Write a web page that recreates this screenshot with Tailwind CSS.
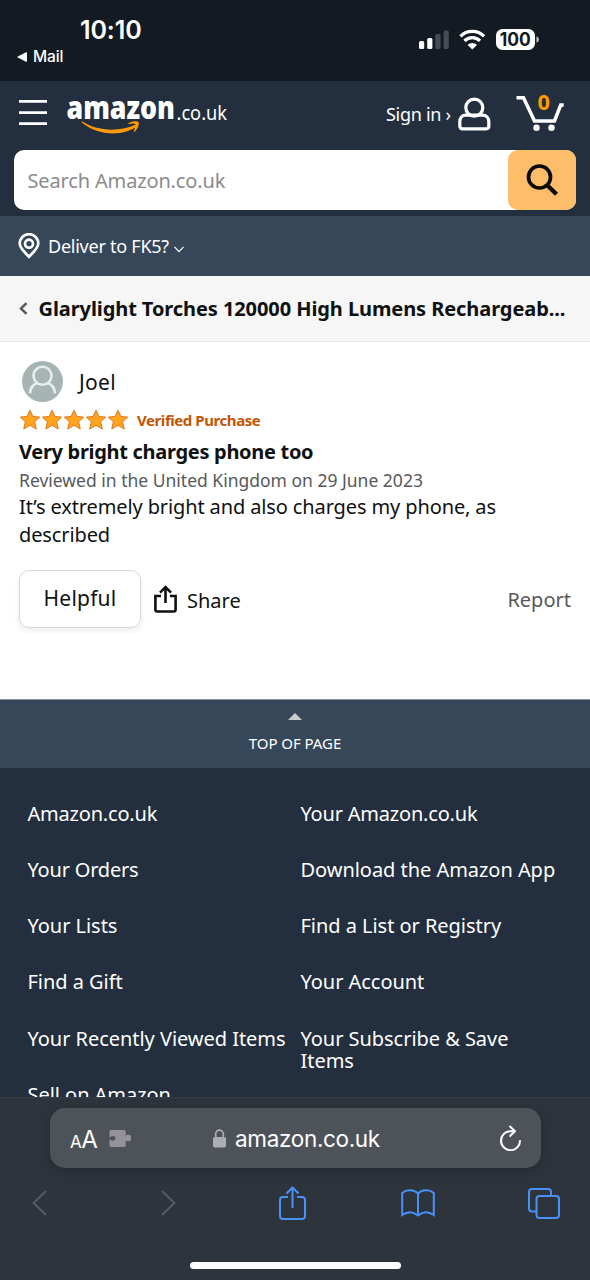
<!DOCTYPE html>
<html lang="en-GB">
<head>
<meta charset="utf-8">
<title>Amazon.co.uk</title>
<script src="https://cdn.jsdelivr.net/npm/@tailwindcss/browser@4"></script>
</head>
<body class="w-[590px] h-[1280px] overflow-hidden bg-white font-['Noto_Sans',sans-serif] text-[#0f1111] flex flex-col whitespace-nowrap">

<!-- Status bar -->
<div class="h-[81px] shrink-0 bg-[#131a22] text-white font-['Inter',sans-serif] flex justify-between">
  <div class="pl-[17px] pt-[15px] flex flex-col">
    <div class="pl-[63px] h-[30px] leading-[30px] text-[25px] font-semibold tracking-[-0.1px]">10:10</div>
    <div class="h-[24px] flex items-center gap-[6px] text-[15.5px] font-medium">
      <svg width="10" height="10" viewBox="0 0 10 10" fill="white"><path d="M9 .3Q10 0 10 1V9Q10 10 9 9.7L.8 5.6Q-.2 5 .8 4.4Z"/></svg>
      <span class="tracking-[-0.1px]">Mail</span>
    </div>
  </div>
  <div class="pt-[28px] pr-[51px] flex items-start">
    <svg width="120" height="24" viewBox="0 0 120 24">
      <rect x="0" y="13" width="5.200" height="8" rx="1.500" fill="#fff"/>
      <rect x="8.200" y="10" width="5.200" height="11" rx="1.500" fill="#fff"/>
      <rect x="16.300" y="6" width="5.200" height="15" rx="1.500" fill="#464c53"/>
      <rect x="24.600" y="2.500" width="5.200" height="18.500" rx="1.500" fill="#464c53"/>
      <g fill="none" stroke="#fff" stroke-width="3.300"><path d="M41.500 8.300a16.500 16.500 0 0 1 23.500 0"/><path d="M45.500 12.800a11 11 0 0 1 15.500 0"/></g>
      <path d="M53.250 21.500l-4.700-4.600a6.800 6.800 0 0 1 9.400 0z" fill="#fff"/>
      <rect x="77" y="1" width="39" height="21" rx="6.500" fill="#fff"/>
      <path d="M117.500 8.200q2.400 1 2.400 3.300t-2.400 3.300z" fill="#c9cbcd"/>
      <text x="96.200" y="18" text-anchor="middle" textLength="31" lengthAdjust="spacingAndGlyphs" font-family="Inter" font-weight="700" font-size="18.500" fill="#131a22">100</text>
    </svg>
  </div>
</div>

<!-- Site header -->
<header class="h-[135px] shrink-0 bg-[#232f3e] text-white">
  <div class="h-[69px] pl-[19px] flex">
    <svg class="mt-[18px]" width="28" height="28" viewBox="0 0 28 28"><path d="M0 2.400h28M0 13.700h28M0 24.600h28" stroke="#fff" stroke-width="2.700"/></svg>
    <svg class="ml-[19px] mt-[11px] overflow-visible shrink-0" width="164" height="46" viewBox="0 0 164 46">
      <text x="0.500" y="26.500" textLength="108.500" lengthAdjust="spacingAndGlyphs" font-family="Open Sans" font-weight="800" font-size="32.500" fill="#fff">amazon</text>
      <text x="110.500" y="28" textLength="50.500" lengthAdjust="spacingAndGlyphs" font-family="Noto Sans" font-size="19" fill="#fff">.co.uk</text>
      <path d="M16 29.200C29 37.500 49 41.500 69.500 32.800c1.500-.7 2.500.8 1.200 1.800C55 45.500 30 43 15.500 30.300z" fill="#f90"/>
      <path d="M62.500 31.200c4-2.500 8.500-2.400 10-1.200 1 1.800-.5 6.800-3.500 9.400-1 .6-1.500.2-1-.7 1-2.500 2-5.400 1.500-6.600-1.300-1-4-.5-6.500-.2-.9 0-1-.4-.5-.7z" fill="#f90"/>
    </svg>
    <div class="ml-[156px] mt-[19px] h-[28px] w-[66px] leading-[28px] text-[18px] tracking-[-0.3px]">Sign in ›</div>
    <svg class="ml-[5px] mt-[16px] shrink-0" width="34" height="34" viewBox="0 0 34 34" fill="none" stroke="#fff" stroke-width="3.200"><circle cx="17.300" cy="10.700" r="8.500"/><path d="M9 18.200h16.500c4 0 6.300 2.600 6.300 6.500v4.300q0 2.800-2.800 2.800H5.600q-2.800 0-2.800-2.800v-4.300c0-3.900 2.200-6.500 6.200-6.500z"/></svg>
    <svg class="ml-[24px] mt-[11px] shrink-0 overflow-visible" width="50" height="42" viewBox="0 0 50 42">
      <path d="M1.500 5.800h7L19.500 29h20l6.200-16h3" fill="none" stroke="#fff" stroke-width="3.500"/>
      <circle cx="21.500" cy="35.700" r="3.200" fill="#fff"/><circle cx="36.500" cy="35.700" r="3.200" fill="#fff"/>
      <text x="22.600" y="18" textLength="12.500" lengthAdjust="spacingAndGlyphs" font-family="Noto Sans" font-weight="700" font-size="22" fill="#f90">0</text>
    </svg>
  </div>
  <div class="mx-[14px] h-[60px] rounded-[10px] bg-white flex items-center justify-between">
    <span class="pl-[13.500px] pt-[1px] text-[20px] text-[#8b8b8b] tracking-[-0.15px]">Search Amazon.co.uk</span>
    <div class="w-[68px] h-[60px] rounded-[10px] bg-[#febd69] flex items-center justify-center">
      <svg width="34" height="34" viewBox="0 0 34 34" fill="none" stroke="#0a0a0a" stroke-width="3.700"><circle cx="14.500" cy="14" r="11"/><path d="M22 22l9.500 9.200" stroke-width="4.300"/></svg>
    </div>
  </div>
</header>

<!-- Delivery location -->
<div class="h-[60px] shrink-0 bg-[#37475a] text-white flex items-center pl-[18px] text-[18px]">
  <svg width="22" height="26" viewBox="0 0 22 26" fill="none" stroke="#fff" stroke-width="2.700"><path d="M11 23.800C6 18.500 1.700 15 1.700 10.500a9.300 9.300 0 0 1 18.600 0C20.300 15 16 18.500 11 23.800z"/><circle cx="11" cy="10.700" r="4"/></svg>
  <span class="ml-[8px] mt-[1px] tracking-[-0.25px]">Deliver to FK5?</span>
  <svg class="ml-[5px] mt-[7px]" width="10" height="7" viewBox="0 0 10 7" fill="none" stroke="#fff" stroke-width="1.200"><path d="M.5 .8L5 5.600 9.500.8"/></svg>
</div>

<!-- Product title -->
<div class="h-[66px] shrink-0 bg-[#f6f6f6] border-b border-[#e7e7e7] flex items-center pl-[19px]">
  <svg width="9" height="13" viewBox="0 0 9 13" fill="none" stroke="#555" stroke-width="2.400"><path d="M7.500 1.200L2 6.500l5.500 5.300"/></svg>
  <span class="ml-[10.500px] text-[20px] font-bold tracking-[-0.08px]">Glarylight Torches 120000 High Lumens Rechargeab...</span>
</div>

<!-- Review -->
<main class="h-[357px] shrink-0 pl-[19px] pr-[19px]">
  <div class="h-[60px] pt-[19px] flex items-center">
    <svg class="ml-[3px]" width="41" height="41" viewBox="0 0 41 41"><circle cx="20.500" cy="20.500" r="20.500" fill="#a6b4b4"/><g fill="none" stroke="#e8eeee" stroke-width="2.600"><circle cx="20.500" cy="14.800" r="9"/><path d="M8 32.300c.3-4.800 3.200-9 8-10.500M33 32.300c-.3-4.800-3.200-9-8-10.500"/></g></svg>
    <span class="ml-[16px] text-[21px] leading-[28px] tracking-[0.3px]">Joel</span>
  </div>
  <div class="h-[36px] flex items-center">
    <svg width="110" height="22" viewBox="0 0 110 22" fill="#ffa41c" stroke="#de7921" stroke-width="1">
      <path id="star" d="M11 1.200l2.900 6.300 6.800.6-5.100 4.700 1.700 7.200L11 16.300l-6.300 3.700 1.700-7.200L1.300 8.100l6.800-.6z"/>
      <use href="#star" x="22"/><use href="#star" x="44"/><use href="#star" x="66"/><use href="#star" x="88"/>
    </svg>
    <span class="ml-[8px] text-[15px] font-bold text-[#c45500] tracking-[-0.43px]">Verified Purchase</span>
  </div>
  <div class="h-[28px] leading-[28px] text-[20px] font-bold tracking-[-0.3px]">Very bright charges phone too</div>
  <div class="h-[28px] leading-[28px] text-[17.500px] text-[#565959]">Reviewed in the United Kingdom on 29 June 2023</div>
  <div class="-mt-px leading-[27.500px] text-[20px] tracking-[-0.12px]">It’s extremely bright and also charges my phone, as<br>described</div>
  <div class="mt-[22px] flex items-center h-[58px]">
    <div class="w-[122px] h-[58px] rounded-[10px] border-[1.5px] border-[#d5d9d9] shadow-[0_3px_6px_rgba(15,17,17,0.08)] flex items-center justify-center text-[21px] pb-[1px] tracking-[0.2px]">Helpful</div>
    <svg class="ml-[13px]" width="23" height="28" viewBox="0 0 23 28" fill="none" stroke="#0f1111" stroke-width="2.600"><path d="M7 11H1.400v13.500q0 2 2 2h16.200q2 0 2-2V11H16M11.500 18V2.500M6 7.700l5.500-5.500L17 7.700"/></svg>
    <span class="ml-[10px] mt-[3px] text-[20px]">Share</span>
    <span class="ml-auto mt-[1px] text-[20px] text-[#565959]">Report</span>
  </div>
</main>

<!-- Back to top -->
<div class="h-[69px] shrink-0 bg-[#37475a] border-t border-[#8a949f] text-white flex flex-col items-center">
  <svg class="mt-[13px]" width="14" height="7" viewBox="0 0 14 7" fill="#ccc"><path d="M0 7L7 0l7 7z"/></svg>
  <span class="mt-[12px] h-[22px] leading-[23px] text-[15px] tracking-[-0.05px]">TOP OF PAGE</span>
</div>

<!-- Footer links -->
<footer class="h-[329px] shrink-0 overflow-hidden bg-[#232f3e] text-white text-[20px] leading-[22px] tracking-[-0.04px] pl-[27.500px] pt-[35px] grid grid-cols-[273px_1fr] auto-rows-[56.150px] content-start">
  <div class="tracking-[-0.2px]">Amazon.co.uk</div><div class="tracking-[-0.2px]">Your Amazon.co.uk</div>
  <div class="tracking-[-0.2px]">Your Orders</div><div>Download the Amazon App</div>
  <div>Your Lists</div><div>Find a List or Registry</div>
  <div>Find a Gift</div><div>Your Account</div>
  <div>Your Recently Viewed Items</div><div>Your Subscribe &amp; Save<br>Items</div>
  <div>Sell on Amazon</div>
</footer>

<!-- Browser toolbar -->
<div class="h-[183px] shrink-0 bg-[#2e343c] border-t border-[#363c44] flex flex-col items-center">
  <div class="mt-[10px] w-[491px] h-[60px] shrink-0 rounded-[15px] bg-[#4e535a] shadow-[0_3px_12px_rgba(0,0,0,0.18)] flex items-center text-white font-['Inter',sans-serif]">
    <div class="ml-[20.500px] mt-[3px] h-[30px] w-[27px] flex items-baseline tracking-[-0.5px]"><span class="text-[17px] leading-[30px]">A</span><span class="text-[24px] leading-[30px]">A</span></div>
    <svg class="ml-[12px]" width="22" height="19" viewBox="0 0 23 19"><path d="M2.500 .5h13q2 0 2 2v4c1-.3 1.200-.9 2.600-.9a3.300 3.300 0 0 1 0 7c-1.400 0-1.600-.7-2.600-.9v4.800q0 2-2 2h-13q-2 0-2-2V2.500q0-2 2-2z" fill="#949298"/><path d="M.5 7.800c1.500.3 2-1 3.800-1a2.500 2.500 0 0 1 0 5c-1.800 0-2.300-1.300-3.800-1z" fill="#4e535a"/></svg>
    <svg class="ml-[82px]" width="13" height="19" viewBox="0 0 13 19"><rect x="0" y="8" width="13" height="10.500" rx="2" fill="#abaeb3"/><path d="M2.700 8.500V5a3.800 3.800 0 0 1 7.600 0v3.500" fill="none" stroke="#abaeb3" stroke-width="1.700"/></svg>
    <span class="ml-[9px] mt-[2px] text-[22.500px] tracking-[-0.33px]">amazon.co.uk</span>
    <svg class="ml-auto mr-[19px]" width="23" height="26" viewBox="0 0 23 26" fill="none" stroke="#fff" stroke-width="2"><path d="M15.500 6.200H11.500A9.500 9.500 0 1 0 21 15.200"/><path d="M10.500 1l5.500 5.200-5.500 5.300" stroke-linejoin="round"/></svg>
  </div>
  <div class="w-full h-[40px] mt-[15px] pl-[22.500px] pr-[29.500px] flex items-center justify-between">
    <div class="w-[34px] flex justify-center"><svg width="15" height="26" viewBox="0 0 15 26" fill="none" stroke="#555b62" stroke-width="2"><path d="M14 1L1.500 13 14 25"/></svg></div>
    <div class="w-[34px] pl-[5px] flex justify-center"><svg width="15" height="26" viewBox="0 0 15 26" fill="none" stroke="#555b62" stroke-width="2"><path d="M1 1l12.500 12L1 25"/></svg></div>
    <div class="w-[34px] pl-px flex justify-center"><svg width="27" height="34" viewBox="0 0 27 34" fill="none" stroke="#4891f7" stroke-width="2"><path d="M9 11H4q-3 0-3 3v16q0 3 3 3h19q3 0 3-3V14q0-3-3-3h-5M13.500 22V2M7.500 7.500l6-6 6 6"/></svg></div>
    <div class="w-[34px] flex justify-center"><svg width="34" height="28" viewBox="0 0 34 28" fill="none" stroke="#4891f7" stroke-width="2"><path d="M17 4.500C13 .5 5.500.3 1.200 4v22c5-3.500 11-3.500 15.800.5 4.800-4 10.800-4 15.800-.5V4C28.500.3 21 .5 17 4.500zM17 4.500v22"/></svg></div>
    <div class="w-[34px] flex justify-center"><svg width="32" height="31" viewBox="0 0 32 31" fill="none" stroke="#4891f7" stroke-width="2"><path d="M8.500 23.500H4q-3 0-3-3V4q0-3 3-3h16q3 0 3 3v4"/><rect x="8.500" y="8" width="22.500" height="22" rx="3"/></svg></div>
  </div>
  <div class="mt-[39px] w-[211px] h-[7px] rounded-full bg-white"></div>
</div>
</body>
</html>
